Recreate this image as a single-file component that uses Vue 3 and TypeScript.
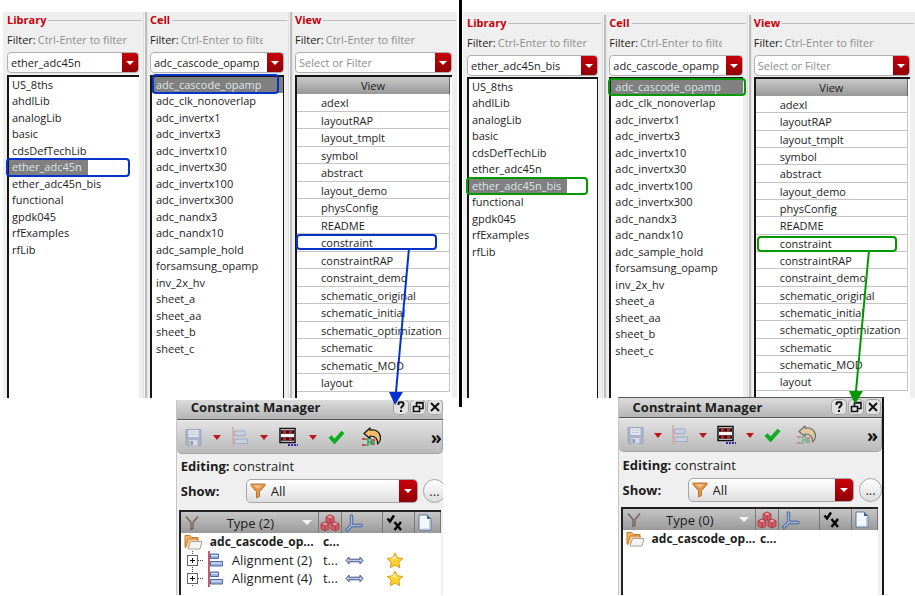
<script setup lang="ts">
interface Side {
  id: string
  library: string
  reach: number
  rows: { name: string; info: string }[]
}

const libraries: string[] = [
  'US_8ths', 'ahdlLib', 'analogLib', 'basic', 'cdsDefTechLib', 'ether_adc45n',
  'ether_adc45n_bis', 'functional', 'gpdk045', 'rfExamples', 'rfLib',
]

const cells: string[] = [
  'adc_cascode_opamp', 'adc_clk_nonoverlap', 'adc_invertx1', 'adc_invertx3',
  'adc_invertx10', 'adc_invertx30', 'adc_invertx100', 'adc_invertx300',
  'adc_nandx3', 'adc_nandx10', 'adc_sample_hold', 'forsamsung_opamp',
  'inv_2x_hv', 'sheet_a', 'sheet_aa', 'sheet_b', 'sheet_c',
]

const views: string[] = [
  'adexl', 'layoutRAP', 'layout_tmplt', 'symbol', 'abstract', 'layout_demo',
  'physConfig', 'README', 'constraint', 'constraintRAP', 'constraint_demo',
  'schematic_original', 'schematic_initial', 'schematic_optimization',
  'schematic', 'schematic_MOD', 'layout',
]

const sides: Side[] = [
  {
    id: 'first',
    library: 'ether_adc45n',
    reach: 144,
    rows: [
      { name: 'Alignment (2)', info: 't...' },
      { name: 'Alignment (4)', info: 't...' },
    ],
  },
  { id: 'second', library: 'ether_adc45n_bis', reach: 141, rows: [] },
]
</script>

<template>
  <main class="board">
    <section v-for="side in sides" :key="side.id" class="half" :class="side.id">
      <div class="browser">
        <div class="column library">
          <h2 class="title"><span>Library</span></h2>
          <div class="filter">
            <label :for="side.id + '-lib-filter'">Filter:</label>
            <input :id="side.id + '-lib-filter'" type="text" placeholder="Ctrl-Enter to filter" />
          </div>
          <div class="combo">
            <input type="text" :value="side.library" aria-label="Library" />
            <button type="button" aria-label="Show libraries"><i class="tri"></i></button>
          </div>
          <ul class="list" role="listbox" aria-label="Libraries">
            <li v-for="name in libraries" :key="name" role="option" :aria-selected="name === side.library">
              <span :class="{ picked: name === side.library }">{{ name }}</span>
              <i v-if="name === side.library" class="mark"></i>
            </li>
          </ul>
        </div>
        <div class="splitter"></div>
        <div class="column cell">
          <h2 class="title"><span>Cell</span></h2>
          <div class="filter">
            <label :for="side.id + '-cell-filter'">Filter:</label>
            <input :id="side.id + '-cell-filter'" type="text" placeholder="Ctrl-Enter to filter" />
          </div>
          <div class="combo">
            <input type="text" value="adc_cascode_opamp" aria-label="Cell" />
            <button type="button" aria-label="Show cells"><i class="tri"></i></button>
          </div>
          <ul class="list" role="listbox" aria-label="Cells">
            <li v-for="(name, i) in cells" :key="name" role="option" :aria-selected="i === 0" :class="{ picked: i === 0 }">
              <span>{{ name }}</span>
              <i v-if="i === 0" class="mark"></i>
            </li>
          </ul>
        </div>
        <div class="splitter"></div>
        <div class="column view">
          <h2 class="title"><span>View</span></h2>
          <div class="filter">
            <label :for="side.id + '-view-filter'">Filter:</label>
            <input :id="side.id + '-view-filter'" type="text" placeholder="Ctrl-Enter to filter" />
          </div>
          <div class="combo">
            <input type="text" placeholder="Select or Filter" aria-label="View" />
            <button type="button" aria-label="Show views"><i class="tri"></i></button>
          </div>
          <div class="list">
            <table class="views">
              <thead><tr><th>View</th></tr></thead>
              <tbody>
                <tr v-for="name in views" :key="name">
                  <td>
                    {{ name }}
                    <i v-if="name === 'constraint'" class="mark">
                      <svg class="arrow" width="26" :height="side.reach + 14" aria-hidden="true">
                        <line x1="20" y1="0" x2="7" :y2="side.reach" />
                        <polygon :points="`0,${side.reach} 14,${side.reach} 6,${side.reach + 13}`" />
                      </svg>
                    </i>
                  </td>
                </tr>
              </tbody>
            </table>
          </div>
        </div>
      </div>

      <div class="manager">
        <header class="bar">
          <h1>Constraint Manager</h1>
          <button type="button" aria-label="Help">
            <svg width="16" height="16" viewBox="0 0 16 16"><path d="M5.500 6V4.500q0-1.200 1.300-1.200h2.400q1.300 0 1.300 1.300v1q0 1-1.500 2-.9.700-.9 1.900M8 11v2" fill="none" stroke="#111" stroke-width="2" /></svg>
          </button>
          <button type="button" aria-label="Restore">
            <svg width="16" height="16" viewBox="0 0 16 16"><path d="M6.500 7V4h6.500v5.500h-3M6 3.500h7.500M3.500 7.500h6v5h-6zM3 7.500h7" fill="none" stroke="#111" stroke-width="1.600" /></svg>
          </button>
          <button type="button" aria-label="Close">
            <svg width="16" height="16" viewBox="0 0 16 16"><path d="M4 4l8 8M12 4l-8 8" stroke="#111" stroke-width="2" /></svg>
          </button>
        </header>

        <div class="tools">
          <button type="button" aria-label="Save">
            <svg width="17" height="19" viewBox="0 0 17 19">
              <path d="M1 1.500h15v16H2l-1-1z" fill="#a9b4c8" stroke="#9aa6bd" />
              <path d="M3.500 2h10v7h-10z" fill="#e2e6ee" />
              <path d="M5 4h7M5 6.500h7" stroke="#bfc8d8" />
              <path d="M4.500 12h8v5.500h-8z" fill="#d5dae4" /><path d="M5.500 13h2.500v4H5.500z" fill="#8e9ab4" />
            </svg>
          </button>
          <button type="button" aria-label="Save options"><i class="drop"></i></button>
          <button type="button" aria-label="Align">
            <svg width="17" height="20" viewBox="0 0 17 20">
              <path d="M1 0v20" stroke="#dba3a6" stroke-width="1.500" />
              <path d="M2.500 4h10.500v4.500H2.500zM2.500 12h13v4.500h-13z" fill="#c7d0e0" stroke="#9eacc6" />
            </svg>
          </button>
          <button type="button" aria-label="Align options"><i class="drop"></i></button>
          <button type="button" aria-label="Pattern">
            <svg width="19" height="20" viewBox="0 0 19 20">
              <path d="M1 1.500h15v14H1z" fill="#f5f5f5" stroke="#111" stroke-width="1.500" />
              <path d="M2 5h13M2 12h13" stroke="#111" stroke-width="3.500" />
              <path d="M4 5h3M10 5h3M4 12h3M10 12h3" stroke="#e0182d" stroke-width="3" />
              <path d="M9 18h10" stroke="#3326c9" stroke-width="2" stroke-dasharray="2 1" />
            </svg>
          </button>
          <button type="button" aria-label="Pattern options"><i class="drop"></i></button>
          <button type="button" aria-label="Check">
            <svg width="17" height="14" viewBox="0 0 17 14"><path d="M2 6.500l4.500 5L15 2" fill="none" stroke="#0fae22" stroke-width="4" /></svg>
          </button>
          <button type="button" class="undo" aria-label="Undo">
            <svg width="20" height="20" viewBox="0 0 20 20">
              <path d="M1 12h3M1 18h3M11 13h5M10 17h5" stroke="#e04444" stroke-width="2" stroke-dasharray="3 2" />
              <path d="M4 12h3v6H4M10 12v6M7 15h6v3" fill="none" stroke="#2fa25c" stroke-width="1.500" />
              <path d="M3 6.500L9 1v2.200c6-1.500 10.500 2.300 10.500 7.300 0 3-1.500 5.500-3 6.500C17 12 14.500 9 9 9v2.500z" fill="#f3c069" stroke="#111" stroke-width="1.200" stroke-linejoin="round" />
            </svg>
          </button>
          <button type="button" class="more" aria-label="More tools">»</button>
        </div>

        <p class="editing"><b>Editing:</b> constraint</p>

        <div class="show">
          <label :for="side.id + '-show'">Show:</label>
          <div class="pick">
            <svg class="funnel" width="16" height="16" viewBox="0 0 16 16">
              <path d="M1 1h14v1.500L9.500 8.500v5L6.500 15V8.500L1 2.500z" fill="#e2944a" stroke="#bd742f" />
              <path d="M3 2.200h9L8 6z" fill="#f4bf86" />
            </svg>
            <select :id="side.id + '-show'"><option>All</option></select>
            <span class="arrowbox"><i class="tri"></i></span>
          </div>
          <button type="button" class="dots" aria-label="Edit filters">...</button>
        </div>

        <div class="grid">
          <table>
            <colgroup>
              <col class="c-type" /><col class="c-cube" /><col class="c-axis" /><col class="c-check" /><col class="c-page" />
            </colgroup>
            <thead>
              <tr>
                <th scope="col">
                  <div class="type">
                    <svg width="14" height="16" viewBox="0 0 14 16"><path d="M1 1.500l5 6v7l2-1v-6l5-6" fill="none" stroke="#6d5a50" stroke-width="1.200" /></svg>
                    <span>Type ({{ side.rows.length }})</span>
                    <i class="sort"></i>
                  </div>
                </th>
                <th scope="col" aria-label="Members">
                  <svg width="20" height="18" viewBox="0 0 20 18">
                    <g stroke="#a83440" stroke-width=".8">
                      <path d="M6 3l4-2 4 2v4.500l-4 2-4-2zM1 10l4-2 4 2v5l-4 2-4-2zM11 10l4-2 4 2v5l-4 2-4-2z" fill="#cf5c64" />
                      <path d="M6 3l4 2 4-2-4-2zM1 10l4 2 4-2-4-2zM11 10l4 2 4-2-4-2z" fill="#eca0a3" />
                      <path d="M10 5v4M5 12v5M15 12v5" />
                    </g>
                  </svg>
                </th>
                <th scope="col" aria-label="Axis">
                  <svg class="start" width="18" height="18" viewBox="0 0 18 18">
                    <path d="M6.500 2v9.500M6.500 11.500h9.500M6.500 11.500L2 16" fill="none" stroke="#40609c" stroke-width="3.400" stroke-linecap="round" />
                    <path d="M6.500 2v9.500M6.500 11.500h9.500M6.500 11.500L2 16" fill="none" stroke="#a8bbdf" stroke-width="1.600" stroke-linecap="round" />
                  </svg>
                </th>
                <th scope="col" aria-label="Status">
                  <svg class="start" width="18" height="18" viewBox="0 0 18 18">
                    <path d="M1.500 4.500l2.500 3L8 1.500" fill="none" stroke="#050505" stroke-width="2.500" />
                    <path d="M8.500 8l6.500 8M15 8l-6.500 8" stroke="#050505" stroke-width="2.400" />
                  </svg>
                </th>
                <th scope="col" aria-label="Notes">
                  <svg class="start" width="14" height="17" viewBox="0 0 14 17">
                    <path d="M1 1h8l4 4v11H1z" fill="#f3f8fc" stroke="#5a7da0" /><path d="M9 1v4h4z" fill="#40658c" />
                    <path d="M11.500 6v9H3" fill="none" stroke="#b9d3e6" />
                  </svg>
                </th>
              </tr>
            </thead>
            <tbody>
              <tr class="root">
                <td>
                  <div class="name">
                    <svg width="19" height="16" viewBox="0 0 19 16">
                      <path d="M1 13V1.500h5l1.500 2H14V6" fill="#f3b067" stroke="#c97b2c" />
                      <path d="M1.500 14L4 5h10v3" fill="#f8cd98" stroke="#c97b2c" />
                      <path d="M4 15l2.500-7.500H18L16 15z" fill="#f4f4f4" stroke="#a9a39a" />
                    </svg>
                    <b>adc_cascode_op...</b>
                  </div>
                </td>
                <td class="info"><b>c...</b></td><td></td><td></td><td></td>
              </tr>
              <tr v-for="row in side.rows" :key="row.name">
                <td>
                  <div class="name branch">
                    <svg width="17" height="18" viewBox="0 0 17 18" shape-rendering="crispEdges">
                      <path d="M6.500 0v4M6.500 14v4M12 9.500h5" stroke="#444" stroke-dasharray="1 1" />
                      <path d="M1.500 4.500h10v10h-10z" fill="#fff" stroke="#666" /><path d="M4 9.500h5M6.500 7v5" stroke="#111" />
                    </svg>
                    <svg width="16" height="18" viewBox="0 0 16 18">
                      <path d="M1 0v18" stroke="#b3343f" stroke-width="1.600" />
                      <path d="M2.500 3h8v4.500h-8zM2.500 10.500h12V15h-12z" fill="#9fb3e0" stroke="#4d66a5" />
                      <path d="M3 4.500h7M3 12h11" stroke="#dde5f7" />
                    </svg>
                    <span>{{ row.name }}</span>
                  </div>
                </td>
                <td class="info">{{ row.info }}</td>
                <td>
                  <svg class="start" width="19" height="9" viewBox="0 0 19 9">
                    <path d="M1 4.500L4 1.200v2h11v-2l3 3.300-3 3.300v-2H4v2z" fill="#b9c8e6" stroke="#405585" />
                  </svg>
                </td>
                <td>
                  <svg class="start" width="18" height="17" viewBox="0 0 18 17">
                    <path d="M9 1l2.300 4.800 5.500.7-4 3.700 1 5.500L9 13l-4.800 2.700 1-5.500-4-3.700 5.500-.7z" fill="#ffd42e" stroke="#d99a1c" stroke-linejoin="round" />
                    <path d="M9 3.500l1.500 3.200 3.500.5H5z" fill="#fff09a" />
                  </svg>
                </td>
                <td></td>
              </tr>
            </tbody>
          </table>
        </div>
      </div>
    </section>
  </main>
</template>

<style>
body {
  background: #fff;
}
</style>

<style scoped>
.board {
  display: grid;
  grid-template-columns: 459fr 456fr;
  height: 100vh;
  min-height: 595px;
  overflow: hidden;
  font-family: "Open Sans", "Noto Sans", sans-serif;
  font-size: 11px;
  color: #1c1c1c;
}
.board * {
  box-sizing: border-box;
}
.board svg {
  flex: none;
}
.half {
  position: relative;
  display: flex;
  flex-direction: column;
  --ink: #0433cc;
}
.second {
  --ink: #009900;
  padding-left: 4px;
}
.second::before {
  content: "";
  position: absolute;
  left: 0;
  top: 0;
  width: 3px;
  height: 407px;
  background: #000;
}
.browser {
  display: grid;
  grid-template-columns: 140fr 5px 140fr 5px 164fr;
  margin: 12px 2px 0 3px;
  background: #efefef;
}
.second .browser {
  margin: 12px 0 0;
  padding-top: 3px;
}
.column {
  display: flex;
  flex-direction: column;
  min-width: 0;
  padding-left: 2px;
}
.library {
  padding-left: 4px;
}
.splitter {
  background: linear-gradient(90deg, #dedede 1px, #f4f4f4 1px 2px, #bdbdbd 2px 4px, #e4e4e4 4px);
}
.title {
  display: flex;
  align-items: center;
  gap: 2px;
  height: 16px;
  margin: 0;
  font-size: 11px;
  line-height: 16px;
  color: #c8000a;
}
.title::after {
  content: "";
  flex: 1;
  height: 1px;
  margin-right: 1px;
  background: #bcbcbc;
}
.filter {
  display: flex;
  align-items: center;
  gap: 2px;
  height: 24px;
  padding-bottom: 2px;
}
.filter input {
  flex: 1;
  padding: 0;
}
.cell .filter {
  padding-right: 25px;
}
input {
  min-width: 0;
  border: 0;
  outline: 0;
  background: transparent;
  font: inherit;
  color: inherit;
}
input::placeholder {
  color: #8e8e8e;
  opacity: 1;
}
.combo {
  display: flex;
  height: 21px;
  margin-right: 4px;
  border: 1px solid #b0b0b0;
  border-radius: 4px;
  background: #fff;
  overflow: hidden;
}
.view .combo,
.view .list {
  margin-right: 5px;
}
.combo input {
  flex: 1;
  padding: 0 0 0 3px;
}
.combo button,
.arrowbox {
  display: flex;
  align-items: center;
  justify-content: center;
  width: 16px;
  padding: 0;
  border: 0;
  background: linear-gradient(#c80009, #8f0006);
}
.tri {
  border: 4px solid transparent;
  border-top-color: #fff;
  border-bottom: 0;
}
.list {
  flex: 1;
  margin: 2px 4px 0 0;
  padding: 0;
  border: 2px solid #161616;
  border-width: 2px 0 0 2px;
  background: #fff;
  list-style: none;
}
.second .list {
  margin-top: 1px;
}
.first .cell .list,
.second .library .list {
  border-right-width: 1px;
}
li {
  position: relative;
  display: flex;
  height: 16px;
  padding-left: 3px;
  line-height: 16px;
}
li:nth-child(even) {
  height: 17px;
}
.cell li {
  padding-left: 4px;
}
.picked {
  background: #808080;
  color: #dce6e6;
}
span.picked {
  margin-left: -3px;
  padding: 0 6px 0 3px;
}
.mark {
  position: absolute;
  z-index: 2;
  border: 2px solid var(--ink);
  border-radius: 4px;
}
.library .mark {
  inset: -1px 9px -1px -3px;
}
.first .cell .mark {
  inset: -3px 4px -1px 0;
}
.second .cell .mark {
  inset: -1px -3px -1px -3px;
}
.view .mark {
  inset: 0 12px 1px -1px;
}
.second .view .mark {
  inset: 1px 10px -1px 1px;
}
.arrow {
  position: absolute;
  top: 100%;
  right: 20px;
  overflow: visible;
  stroke: var(--ink);
  fill: var(--ink);
  stroke-width: 2px;
}
.arrow polygon {
  stroke: none;
}
table {
  width: 100%;
  border-collapse: separate;
  border-spacing: 0;
}
th,
td {
  padding: 0;
  text-align: left;
  font-weight: normal;
  white-space: nowrap;
}
.views {
  width: calc(100% - 2px);
  line-height: 15px;
}
.views th {
  height: 17px;
  border-right: 1px solid #666;
  background: linear-gradient(#c9c9c9, #989898);
  text-align: center;
}
.views td {
  position: relative;
  height: 17px;
  padding-left: 24px;
  border: 1px solid #c4c4c4;
  border-width: 0 1px 1px 0;
}
.first .views tr:nth-child(odd) td,
.second .views tr:nth-child(3n + 2) td {
  height: 18px;
}
.view .list {
  padding-bottom: 6px;
}
.second .view .list {
  padding-bottom: 7px;
}

.manager {
  display: flex;
  flex-direction: column;
  flex: 1;
  margin: 2px 3.5% 1px 38.3%;
  border-left: 1px solid #c4c4c4;
  background: #efefef;
  overflow: hidden;
  font-size: 13px;
}
.second .manager {
  position: relative;
  margin: -1px 31px 1px 34.2%;
  border-right: 2px solid #161616;
  border-top: 1px solid #555;
}
.bar {
  display: flex;
  align-items: center;
  gap: 1px;
  height: 20px;
  padding: 0 0 6px 14px;
  border-bottom: 1px solid #555;
  background: linear-gradient(#dcdcdc, #b4b4b4);
}
.second .bar {
  padding: 0 1px 2px 14px;
}
.bar h1 {
  flex: 1;
  margin: 0;
  font-size: 13px;
  line-height: 16px;
  white-space: nowrap;
}
.bar button {
  display: flex;
  padding: 0;
  border: 0;
  border-radius: 5px;
  background: #e2e2e2;
  box-shadow: inset 0 0 0 1px #a2a2a2;
}
.tools {
  display: flex;
  align-items: center;
  gap: 11px;
  height: 34px;
  padding: 0 0 0 8px;
  border: 1px solid #a4a4a4;
  border-top-color: #efefef;
  border-left: 0;
  border-radius: 0 0 5px 5px;
  background: linear-gradient(#e2e2e2, #b9b9b9);
}
.second .tools {
  gap: 10px;
}
.tools button {
  display: flex;
  padding: 0;
  border: 0;
  background: none;
}
.drop {
  border: 4px solid transparent;
  border-top: 5px solid #c0141b;
  border-bottom: 0;
}
.tools .undo {
  margin-left: 5px;
}
.second .undo {
  opacity: 0.5;
}
.tools .more {
  margin-left: auto;
  font: bold 18px/20px "Open Sans", sans-serif;
  color: #111;
}
.second .more {
  margin-right: 3px;
}
.editing {
  margin: 3px 0 0 4px;
  line-height: 18px;
}
.second .editing {
  margin-top: 4px;
}
.show {
  display: flex;
  align-items: center;
  gap: 5px;
  margin-top: 4px;
  padding-left: 4px;
}
.first .show {
  margin-right: -3px;
}
.show label {
  width: 60px;
  font-weight: bold;
}
.pick {
  position: relative;
  display: flex;
  flex: 1;
}
select {
  flex: 1;
  height: 24px;
  padding: 0 20px 0 24px;
  border: 1px solid #a5a5a5;
  border-radius: 5px;
  appearance: none;
  background: linear-gradient(#fff, #dedede);
  font: inherit;
  color: inherit;
}
.funnel {
  position: absolute;
  left: 4px;
  top: 4px;
}
.arrowbox {
  position: absolute;
  top: 1px;
  right: 1px;
  width: 18px;
  height: 22px;
  border-radius: 0 4px 4px 0;
  pointer-events: none;
}
.dots {
  width: 23px;
  height: 24px;
  padding: 0;
  border: 1px solid #a5a5a5;
  border-radius: 12px;
  background: linear-gradient(#fff, #dcdcdc);
  font: inherit;
  color: #333;
}
.grid {
  flex: 1;
  margin: 7px 2px 0 2px;
  border: 2px solid #222;
  border-width: 2px 0 0 2px;
  background: #fff;
}
.second .grid {
  margin: 5px 4px 0 2px;
}
.grid table {
  table-layout: fixed;
}
.c-cube {
  width: 23px;
}
.c-axis {
  width: 41px;
}
.c-check {
  width: 32px;
}
.c-page {
  width: 26px;
}
.grid th {
  height: 21px;
  border-right: 1px solid #777;
  background: linear-gradient(#c6c6c6, #999);
}
.grid th svg {
  display: block;
  margin: 0 auto;
}
.grid svg.start {
  display: block;
  margin: 0 0 0 3px;
}
.type {
  display: flex;
  align-items: center;
  justify-content: space-between;
  padding: 0 6px 0 4px;
}
.grid .type svg {
  margin: 0;
}
.sort {
  border: 5px solid transparent;
  border-top-color: #f4f4f4;
  border-bottom: 0;
}
.grid td {
  height: 18px;
  line-height: 18px;
}
.root {
  font-size: 12px;
}
.grid .info {
  padding-left: 4px;
}
.name {
  display: flex;
  align-items: center;
  gap: 7px;
  padding-left: 3px;
}
.branch {
  gap: 5px;
  padding-left: 5px;
}
.branch svg + svg {
  margin-right: 3px;
}
</style>
